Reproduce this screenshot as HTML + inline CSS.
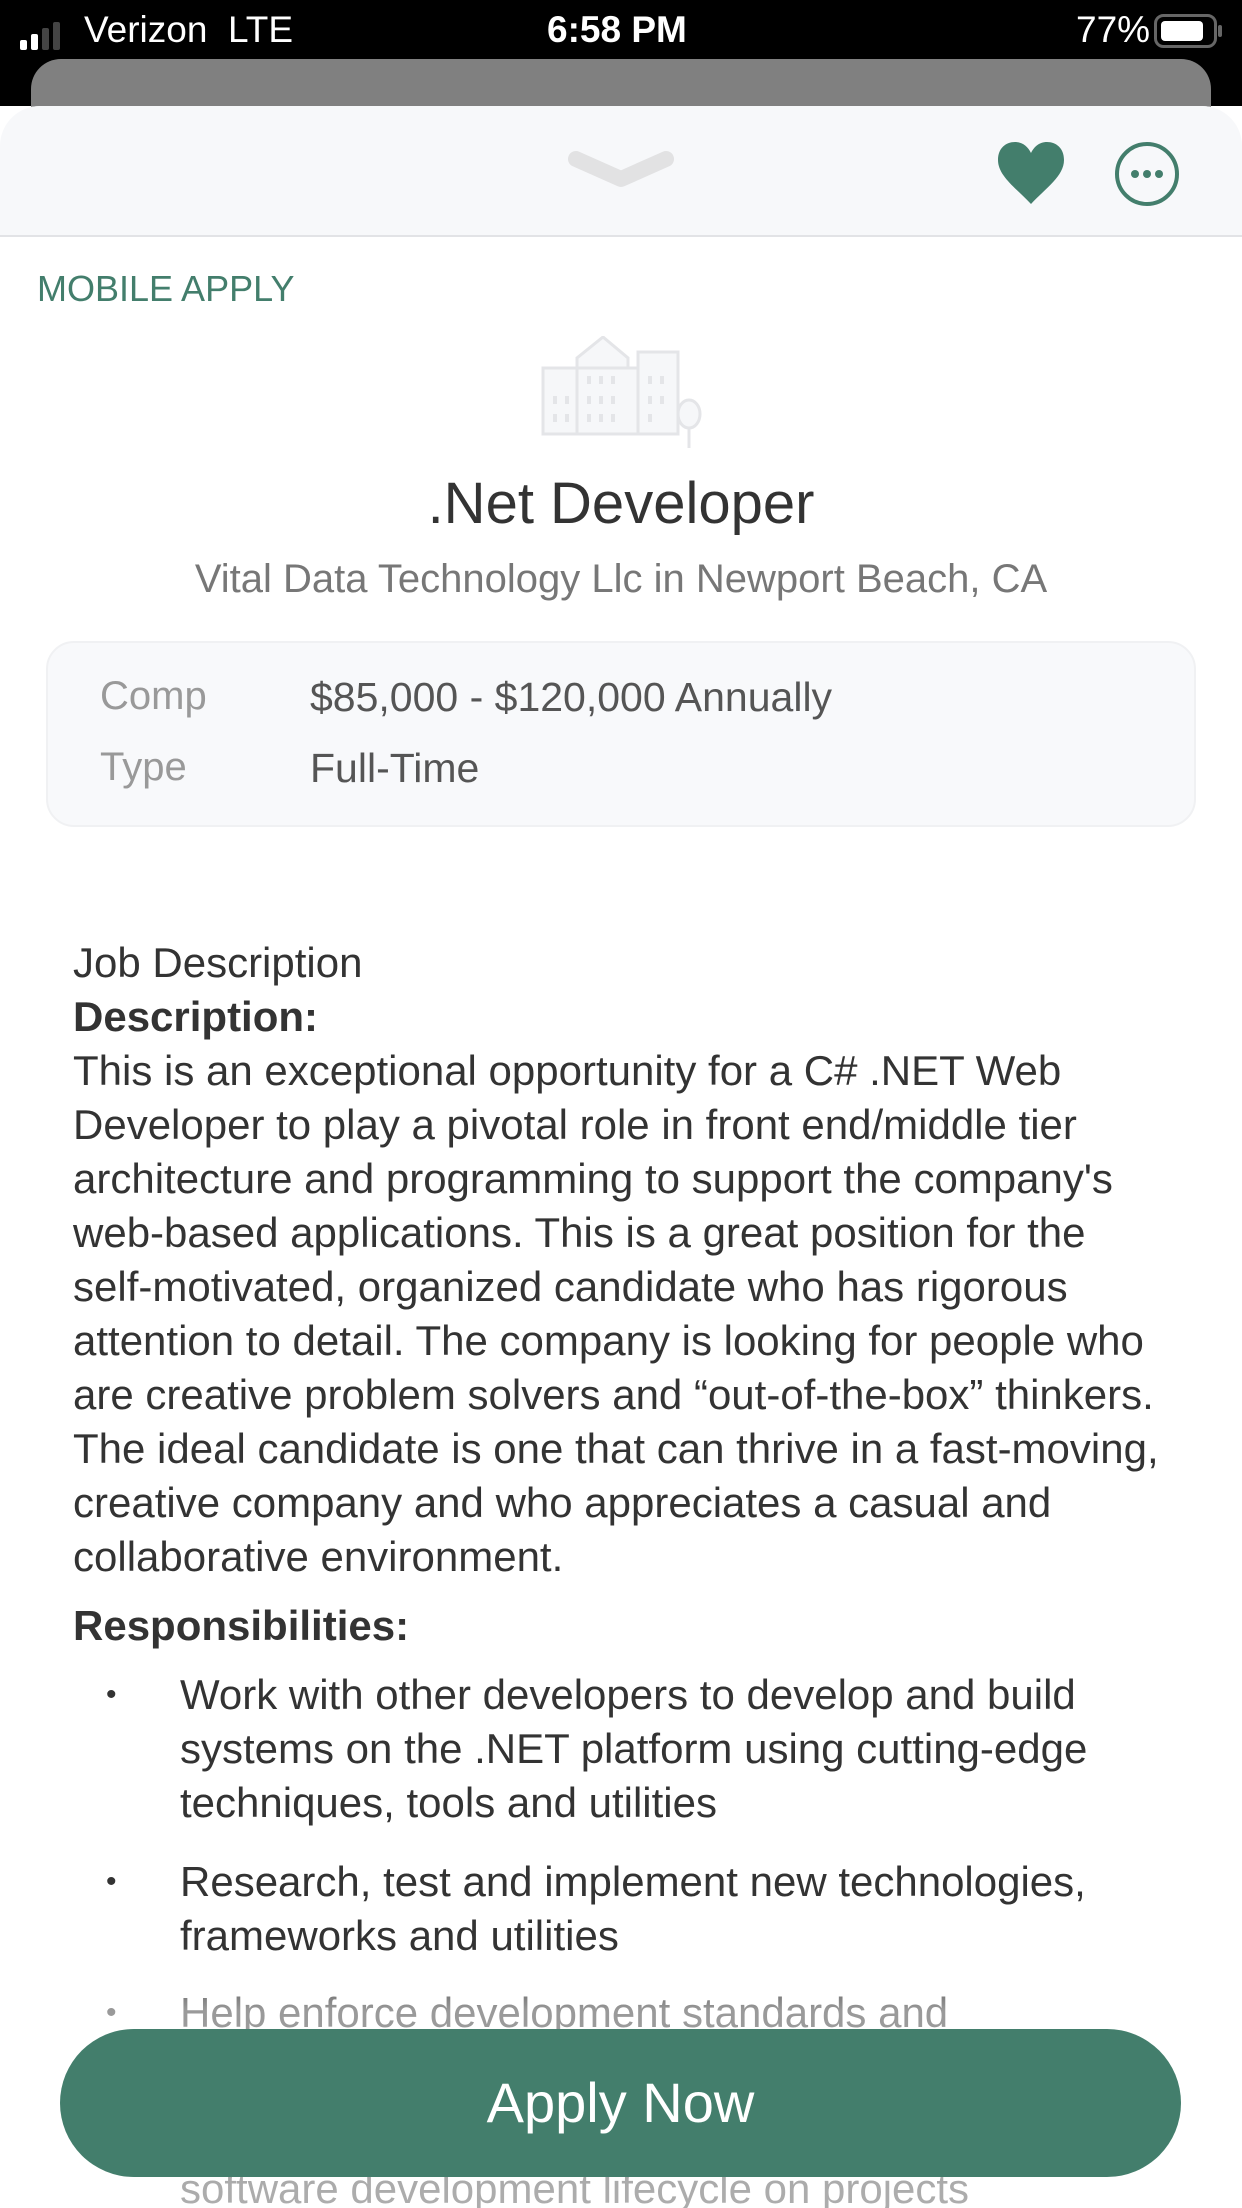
<!DOCTYPE html>
<html style="background:#fff"><head><meta charset="utf-8">
<style>
*{margin:0;padding:0;box-sizing:border-box}
html,body{width:1242px;height:2208px;overflow:hidden}
body{background:#fff;font-family:"Liberation Sans",Arial,sans-serif;position:relative}
.abs{position:absolute;white-space:nowrap}
.sb{color:#fff;font-size:37px;top:9px}
.card{position:absolute;left:31px;top:59px;width:1180px;height:120px;background:#808080;border-radius:30px 30px 0 0}
.sheet{position:absolute;left:0;top:106px;width:1242px;height:2102px;background:#fff;border-radius:40px 40px 0 0;overflow:hidden}
.hdr{position:absolute;left:0;top:0;width:1242px;height:131px;background:#f7f8fa;border-bottom:2px solid #e2e3e6}
.t{position:absolute;left:73px;white-space:nowrap;font-size:42px;line-height:54px;color:#333}
.b{font-weight:bold}
.li{left:180px}
.dot{position:absolute;left:106px;font-size:30px;line-height:54px;color:#333}
</style></head><body>
<div class="abs" style="left:0;top:0;width:1242px;height:106px;background:#000"></div>
<div class="abs" style="left:20px;top:22px">
<svg width="56" height="30"><rect x="0" y="18" width="7" height="10" rx="2" fill="#fff"/><rect x="11" y="12" width="7" height="16" rx="2" fill="#fff"/><rect x="22" y="6" width="7" height="22" rx="2" fill="#444"/><rect x="33" y="0" width="7" height="28" rx="2" fill="#444"/></svg></div>
<div class="abs sb" style="left:84px">Verizon&nbsp;&nbsp;LTE</div>
<div class="abs sb" style="left:547px;font-weight:bold">6:58 PM</div>
<div class="abs sb" style="left:1076px">77%</div>
<div class="abs" style="left:1154px;top:14px"><svg width="70" height="36"><rect x="1.5" y="1.5" width="60" height="31" rx="8" fill="none" stroke="#666" stroke-width="3"/><rect x="7" y="7" width="42" height="20" rx="4" fill="#fff"/><rect x="64" y="11" width="4" height="12" rx="2" fill="#666"/></svg></div>
<div class="card"></div>
<div class="sheet">
 <div class="hdr">
  <svg class="abs" style="left:566px;top:43px" width="110" height="40"><path d="M10 10 L55 30 L100 10" stroke="#e2e2e3" stroke-width="16" fill="none" stroke-linecap="round" stroke-linejoin="round"/></svg>
  <svg class="abs" style="left:996px;top:34px" width="70" height="66" viewBox="0 0 70 66"><path d="M35 64 C20 48 2 36 2 20 C2 8 10 2 19 2 C27 2 32 7 35 13 C38 7 43 2 51 2 C60 2 68 8 68 20 C68 36 50 48 35 64Z" fill="#437e6c"/></svg>
  <svg class="abs" style="left:1113px;top:32px" width="70" height="70"><circle cx="34" cy="36" r="30" fill="none" stroke="#437e6c" stroke-width="4"/><circle cx="22" cy="36" r="4" fill="#437e6c"/><circle cx="34" cy="36" r="4" fill="#437e6c"/><circle cx="46" cy="36" r="4" fill="#437e6c"/></svg>
 </div>
 <div class="abs" style="left:37px;top:162px;font-size:36px;color:#437e6c">MOBILE APPLY</div>
 <svg class="abs" style="left:540px;top:230px" width="166" height="112" viewBox="0 0 166 112">
  <g fill="#f6f7f9" stroke="#e4e5e8" stroke-width="3"><path d="M3 86 L3 32 L37 32 L37 22 L63 1 L88 22 L88 48"/><rect x="3" y="32" width="128" height="66"/><rect x="98" y="16" width="40" height="82"/><path d="M37 32 L37 98"/><ellipse cx="149" cy="78" rx="11" ry="14"/><path d="M149 92 L149 112"/></g>
  <g fill="#e4e5e8"><rect x="47" y="40" width="4" height="8"/><rect x="59" y="40" width="4" height="8"/><rect x="71" y="40" width="4" height="8"/><rect x="13" y="60" width="4" height="8"/><rect x="25" y="60" width="4" height="8"/><rect x="47" y="60" width="4" height="8"/><rect x="59" y="60" width="4" height="8"/><rect x="71" y="60" width="4" height="8"/><rect x="13" y="78" width="4" height="8"/><rect x="25" y="78" width="4" height="8"/><rect x="47" y="78" width="4" height="8"/><rect x="59" y="78" width="4" height="8"/><rect x="71" y="78" width="4" height="8"/><rect x="108" y="40" width="4" height="8"/><rect x="120" y="40" width="4" height="8"/><rect x="108" y="60" width="4" height="8"/><rect x="120" y="60" width="4" height="8"/><rect x="108" y="78" width="4" height="8"/></g>
 </svg>
 <div class="abs" style="left:0;width:1242px;text-align:center;top:364px;font-size:58px;color:#333">.Net Developer</div>
 <div class="abs" style="left:0;width:1242px;text-align:center;top:451px;font-size:40px;color:#777">Vital Data Technology Llc in Newport Beach, CA</div>
 <div class="abs" style="left:46px;top:535px;width:1150px;height:186px;background:#f8f9fb;border:2px solid #f0f1f3;border-radius:28px"></div>
 <div class="abs" style="left:100px;top:568px;font-size:40px;color:#999">Comp</div>
 <div class="abs" style="left:310px;top:568px;font-size:41px;color:#555">$85,000 - $120,000 Annually</div>
 <div class="abs" style="left:100px;top:639px;font-size:40px;color:#999">Type</div>
 <div class="abs" style="left:310px;top:639px;font-size:41px;color:#555">Full-Time</div>
</div>
<div class="t" style="top:936px">Job Description</div>
<div class="t b" style="top:990px">Description:</div>
<div class="t" style="top:1044px">This is an exceptional opportunity for a C# .NET Web<br>Developer to play a pivotal role in front end/middle tier<br>architecture and programming to support the company's<br>web-based applications. This is a great position for the<br>self-motivated, organized candidate who has rigorous<br>attention to detail. The company is looking for people who<br>are creative problem solvers and “out-of-the-box” thinkers.<br>The ideal candidate is one that can thrive in a fast-moving,<br>creative company and who appreciates a casual and<br>collaborative environment.</div>
<div class="t b" style="top:1599px">Responsibilities:</div>
<div class="dot" style="top:1668px">•</div>
<div class="t li" style="top:1668px">Work with other developers to develop and build<br>systems on the .NET platform using cutting-edge<br>techniques, tools and utilities</div>
<div class="dot" style="top:1855px">•</div>
<div class="t li" style="top:1855px">Research, test and implement new technologies,<br>frameworks and utilities</div>
<div class="dot" style="top:1986px">•</div>
<div class="t li" style="top:1986px">Help enforce development standards and</div>
<div class="t li" style="top:2169px;line-height:40px">software development lifecycle on projects</div>
<div class="abs" style="left:0;top:1960px;width:1242px;height:248px;background:linear-gradient(rgba(255,255,255,0),rgba(255,255,255,.5) 20%,rgba(255,255,255,.6))"></div>
<div class="abs" style="left:60px;top:2029px;width:1121px;height:148px;background:#437e6c;border-radius:74px;color:#fff;font-size:56px;text-align:center;line-height:148px">Apply Now</div>
</body></html>
